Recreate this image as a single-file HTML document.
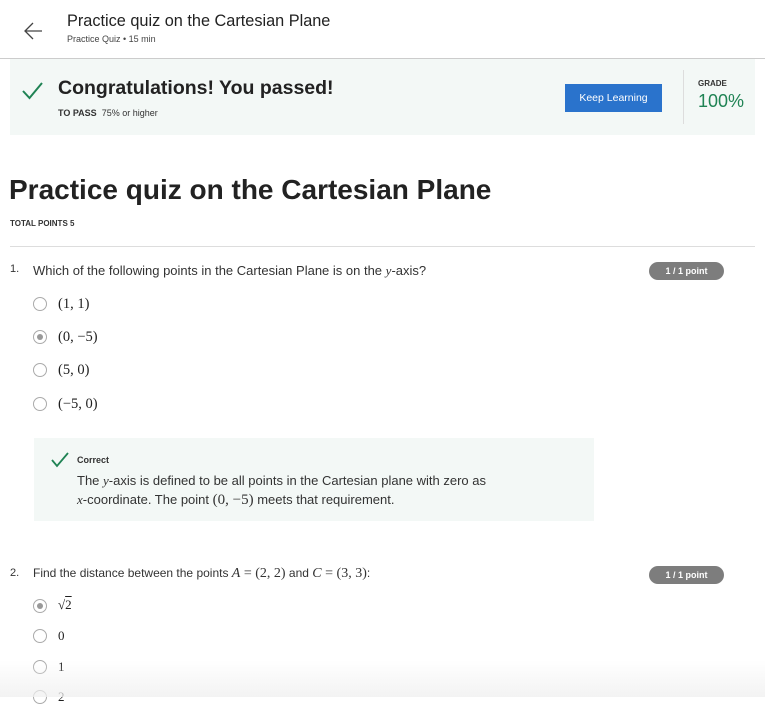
<!DOCTYPE html>
<html><head><meta charset="utf-8"><style>
*{margin:0;padding:0;box-sizing:border-box}
body{width:765px;height:697px;overflow:hidden;background:#fff;font-family:"Liberation Sans",sans-serif;color:#1f1f1f;position:relative}
.a{position:absolute;white-space:nowrap}
.serif{font-family:"Liberation Serif",serif}
.radio{position:absolute;width:14px;height:14px;border:1.5px solid #aaa;border-radius:50%;background:#fff}
.radio.sel::after{content:"";position:absolute;left:2.5px;top:2.5px;width:6px;height:6px;border-radius:50%;background:#999}
.pill{position:absolute;width:75px;height:18px;border-radius:9px;background:#7d7d7d;color:#fff;font-size:9px;font-weight:bold;text-align:center;line-height:18px}
</style></head><body>
<svg class="a" style="left:23px;top:21px" width="20" height="20" viewBox="0 0 20 20"><path d="M19 10H2M10 2L2 10L10 18" fill="none" stroke="#444" stroke-width="1.3"/></svg>
<div class="a" style="left:67px;top:12px;font-size:16.3px;color:#222">Practice quiz on the Cartesian Plane</div>
<div class="a" style="left:67px;top:34px;font-size:9px;color:#444">Practice Quiz • 15 min</div>
<div class="a" style="left:0;top:58px;width:765px;height:1px;background:#ccc"></div>
<div class="a" style="left:10px;top:59px;width:745px;height:76px;background:#f3f8f6"></div>
<svg class="a" style="left:22px;top:81px" width="22" height="20" viewBox="0 0 22 20"><path d="M1 10L7.5 17L20 2" fill="none" stroke="#1f8354" stroke-width="2"/></svg>
<div class="a" style="left:58px;top:77px;font-size:19.5px;font-weight:bold;color:#222">Congratulations! You passed!</div>
<div class="a" style="left:58px;top:108px;font-size:9px;color:#333"><b>TO PASS</b>&nbsp; 75% or higher</div>
<div class="a" style="left:565px;top:84px;width:97px;height:28px;background:#2a73cc;color:#fff;font-size:10.5px;text-align:center;line-height:28px">Keep Learning</div>
<div class="a" style="left:683px;top:70px;width:1px;height:54px;background:#ddd"></div>
<div class="a" style="left:698px;top:79px;font-size:8px;font-weight:bold;color:#333">GRADE</div>
<div class="a" style="left:698px;top:91px;font-size:18px;color:#1f8354">100%</div>
<div class="a" style="left:9px;top:174px;font-size:28px;font-weight:bold;color:#222">Practice quiz on the Cartesian Plane</div>
<div class="a" style="left:10px;top:219px;font-size:8px;font-weight:bold;color:#333">TOTAL POINTS 5</div>
<div class="a" style="left:10px;top:246px;width:745px;height:1px;background:#ddd"></div>

<div class="a" style="left:10px;top:263px;font-size:11px;color:#333">1.</div>
<div class="a" style="left:33px;top:263px;font-size:13px;color:#333">Which of the following points in the Cartesian Plane is on the <i class="serif">y</i>-axis?</div>
<div class="pill" style="left:649px;top:262px">1 / 1 point</div>
<div class="radio" style="left:33px;top:297px"></div><div class="a serif" style="left:58px;top:296px;font-size:14.5px">(1, 1)</div>
<div class="radio sel" style="left:33px;top:330px"></div><div class="a serif" style="left:58px;top:329px;font-size:14.5px">(0, −5)</div>
<div class="radio" style="left:33px;top:363px"></div><div class="a serif" style="left:58px;top:362px;font-size:14.5px">(5, 0)</div>
<div class="radio" style="left:33px;top:397px"></div><div class="a serif" style="left:58px;top:396px;font-size:14.5px">(−5, 0)</div>

<div class="a" style="left:34px;top:438px;width:560px;height:83px;background:#f3f8f6"></div>
<svg class="a" style="left:51px;top:452px" width="18" height="16" viewBox="0 0 18 16"><path d="M1 8L6 14L17 1" fill="none" stroke="#1f8354" stroke-width="1.8"/></svg>
<div class="a" style="left:77px;top:455px;font-size:9px;font-weight:bold;color:#333">Correct</div>
<div class="a" style="left:77px;top:473px;font-size:13px;color:#333">The <i class="serif">y</i>-axis is defined to be all points in the Cartesian plane with zero as</div>
<div class="a" style="left:77px;top:492px;font-size:13px;color:#333"><i class="serif">x</i>-coordinate. The point <span class="serif" style="font-size:15px">(0, −5)</span> meets that requirement.</div>

<div class="a" style="left:10px;top:567px;font-size:11px;color:#333">2.</div>
<div class="a" style="left:33px;top:566px;font-size:12px;color:#333">Find the distance between the points <span class="serif" style="font-size:14px"><i>A</i> = (2, 2)</span> and <span class="serif" style="font-size:14px"><i>C</i> = (3, 3)</span>:</div>
<div class="pill" style="left:649px;top:566px">1 / 1 point</div>
<div class="radio sel" style="left:33px;top:599px"></div><div class="a serif" style="left:58px;top:597px;font-size:13px">√<span style="text-decoration:overline">2</span></div>
<div class="radio" style="left:33px;top:629px"></div><div class="a serif" style="left:58px;top:628px;font-size:13px">0</div>
<div class="radio" style="left:33px;top:660px"></div><div class="a serif" style="left:58px;top:659px;font-size:13px">1</div>
<div class="radio" style="left:33px;top:690px"></div><div class="a serif" style="left:58px;top:689px;font-size:13px">2</div>
<div class="a" style="left:0;top:660px;width:765px;height:37px;background:linear-gradient(rgba(255,255,255,0),rgba(240,240,240,0.8))"></div>
</body></html>
